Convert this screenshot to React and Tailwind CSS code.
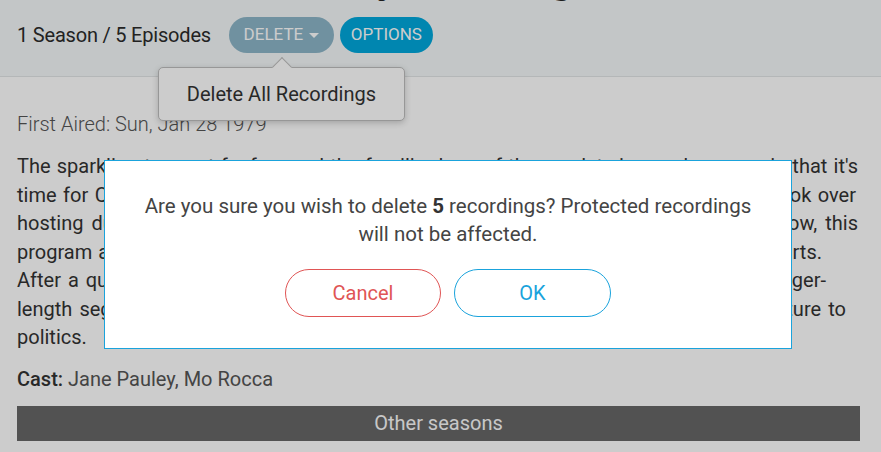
import React from 'react';

const lines = [
    { text: "The sparkling trumpet fanfare and the familiar logo of the sun let viewers know again that it's", pr: 'pr-[2px]' },
    { text: 'time for CBS News Sunday Morning. Ever since veteran CBS journalist Jane Pauley took over', pr: 'pr-[4px]' },
    { text: "hosting duties from Charles Osgood in 2016, the former co-host of NBC's Today show, this", pr: 'pr-[2px]' },
    { text: 'program airs at an unhurried, relaxed pace covering the news, people, nature and the arts.', pr: 'pr-[38px]' },
    { text: "After a quick look at the week's top headlines, viewers are then treated to several longer-", pr: 'pr-[34px]' },
    { text: 'length segments on a wide range of subjects, from nature to science, music and culture to', pr: 'pr-[14px]' },
];

const App = () => {
    const font = { fontFamily: 'Roboto, "Liberation Sans", sans-serif' };

    return (
        <div className="relative w-[881px] h-[452px] overflow-hidden bg-white text-[#333]" style={font}>
            {/* page */}
            <div className="flow-root h-[77px] bg-[#f4f8f9] border-b border-[#e2e5e6] pl-[17px] pr-[21px]">
                <h1 className="text-[44px] font-bold leading-[52px] -mt-[49px] pl-[19px] text-[#222] whitespace-nowrap">CBS News Sunday Morning</h1>
                <div className="flex items-center mt-[14px]">
                    <div className="text-[20px] text-[#2b2b2b] mr-[18px] tracking-[-0.2px]">1 Season / 5 Episodes</div>
                    <div className="relative">
                        <button className="h-[36px] w-[105px] rounded-full bg-[#8db6c8] text-white text-[17px] flex items-center justify-center gap-[6px]">
                            DELETE
                            <span className="w-0 h-0 border-l-[5px] border-r-[5px] border-t-[5px] border-l-transparent border-r-transparent border-t-white"></span>
                        </button>
                        {/* dropdown */}
                        <div className="absolute left-[-71px] top-[50px] w-[247px] h-[54px] rounded-[5px] border border-[#bdbdbd] bg-white shadow-[0_2px_6px_rgba(0,0,0,0.2)] flex items-center justify-center z-10">
                            <div className="absolute left-[116px] -top-[8px] w-[14px] h-[14px] rotate-45 bg-white border-l border-t border-[#bdbdbd]"></div>
                            <span className="text-[20px] text-[#333] relative">Delete All Recordings</span>
                        </div>
                    </div>
                    <button className="ml-[6px] h-[36px] w-[93px] rounded-full bg-[#00a8dc] text-white text-[17px]">OPTIONS</button>
                </div>
            </div>

            <div className="pl-[17px] pr-[21px]">
                <div className="mt-[32px] text-[20px] font-light text-[#555]">First Aired: Sun, Jan 28 1979</div>
                <div className="mt-[13px] text-[20px] leading-[28.5px] text-[#333]">
                    {lines.map((l, i) => (
                        <span key={i} className={`block whitespace-nowrap text-justify [text-align-last:justify] ${l.pr}`}>{l.text}</span>
                    ))}
                    <span className="block">politics.</span>
                </div>
                <div className="mt-[12px] text-[20px] text-[#555]">
                    <span className="font-medium text-[#333]">Cast:</span> Jane Pauley, Mo Rocca
                </div>
                <div className="mt-[12px] h-[35px] bg-[#676767] text-[#fafafa] text-[20px] flex items-center justify-center">
                    Other seasons
                </div>
            </div>

            {/* overlay */}
            <div className="absolute inset-0 bg-black/20 z-20"></div>

            {/* dialog */}
            <div className="absolute left-[104px] top-[160px] w-[688px] h-[189px] bg-white border border-[#1aa3dc] z-30 flex flex-col items-center px-[30px] pt-[31px]">
                <p className="text-[20.5px] leading-[28px] text-[#444] text-center">
                    Are you sure you wish to delete <span className="font-bold text-[#333]">5</span> recordings? Protected recordings will not be affected.
                </p>
                <div className="flex gap-[13px] mt-[21px]">
                    <button className="w-[156px] h-[48px] rounded-full border border-[#e05555] text-[#e05555] text-[20px]">Cancel</button>
                    <button className="w-[157px] h-[48px] rounded-full border border-[#1aa3dc] text-[#1aa3dc] text-[20px]">OK</button>
                </div>
            </div>
        </div>
    );
};

export default App;
